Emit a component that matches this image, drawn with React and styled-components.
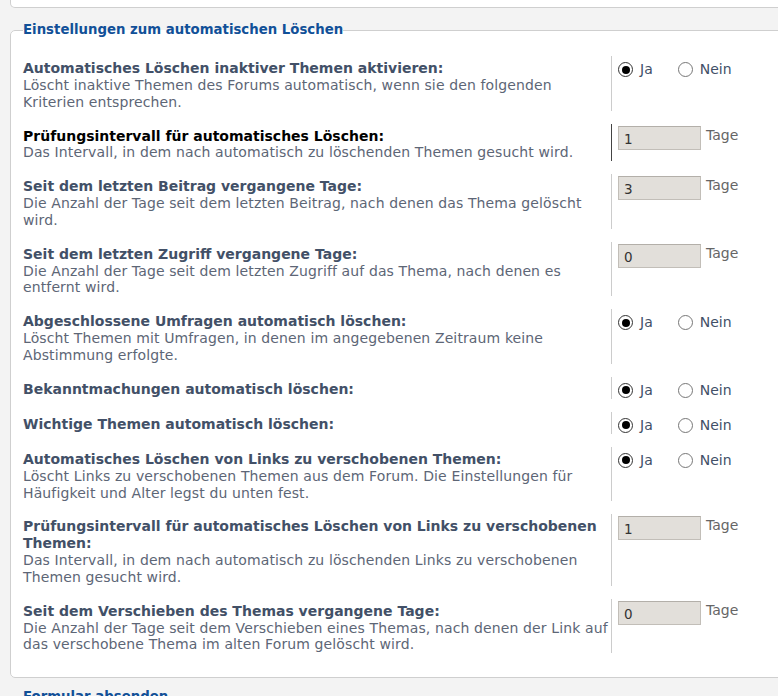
import React from 'react';
import styled, { createGlobalStyle } from 'styled-components';

const GlobalStyle = createGlobalStyle`
  html, body {
    margin: 0;
    padding: 0;
    overflow: hidden;
    background: #f3f3f3;
  }
  body {
    font-family: "DejaVu Sans", Verdana, sans-serif;
  }
`;

const Page = styled.div`
  padding-left: 10px;
  width: 1100px;
`;

const TopBox = styled.div`
  height: 7px;
  background: #fff;
  border: 1px solid #cfcfcf;
  border-top: none;
  border-radius: 0 0 0 5px;
`;

const Fieldset = styled.fieldset`
  margin: ${({ first }) => (first ? '13px' : '10px')} 0 0;
  padding: 0 12px 24px 12px;
  background: #fff;
  border: 1px solid #cfcfcf;
  border-radius: 5px;
`;

const Legend = styled.legend`
  padding: 0;
  margin-left: 0;
  font-family: "DejaVu Sans", Verdana, sans-serif;
  font-size: 13.3px;
  font-weight: bold;
  color: #115098;
  line-height: 18px;
`;

const List = styled.div`
  display: flex;
  flex-direction: column;
  gap: 13px;
  padding-top: 17px;
  width: 740px;
`;

const Row = styled.dl`
  display: grid;
  grid-template-columns: 588px 1fr;
  margin: 0;
`;

const Term = styled.dt`
  padding-top: 4px;
  font-size: 14px;
  line-height: 16.85px;
`;

const Title = styled.div`
  font-weight: bold;
  color: ${({ active }) => (active ? '#000' : '#425067')};
`;

const Explain = styled.div`
  color: #5d6676;
  letter-spacing: 0.12px;
`;

const Value = styled.dd`
  margin: 0;
  border-left: 1px solid ${({ active }) => (active ? '#444' : '#cccccc')};
  padding: ${({ kind }) => (kind === 'radio' ? '5px' : '2px')} 0 0 6px;
  display: flex;
  align-items: flex-start;
  font-size: 14px;
  line-height: 17px;
`;

const RadioLabel = styled.label`
  display: flex;
  align-items: center;
  gap: 7px;
  color: #425067;
  margin-right: ${({ last }) => (last ? '0' : '25px')};
`;

const Radio = styled.span`
  box-sizing: border-box;
  width: 15px;
  height: 15px;
  border-radius: 50%;
  border: 1px solid ${({ checked }) => (checked ? '#333' : '#777')};
  background: #fff;
  display: flex;
  align-items: center;
  justify-content: center;
  &::after {
    content: '';
    display: ${({ checked }) => (checked ? 'block' : 'none')};
    width: 8px;
    height: 8px;
    border-radius: 50%;
    background: #000;
  }
`;

const NumberBox = styled.input`
  box-sizing: border-box;
  width: 83px;
  height: 24px;
  margin: 0;
  padding: 2px 5px 0;
  border: 1px solid #c2beb8;
  border-top-color: #b3afa9;
  background: #e2dfda;
  font-family: "DejaVu Sans", Verdana, sans-serif;
  font-size: 13.5px;
  color: #333;
  outline: none;
`;

const Unit = styled.span`
  margin-left: 5px;
  color: #666;
  line-height: 17px;
  padding-top: 1px;
`;

const rows = [
  {
    title: 'Automatisches Löschen inaktiver Themen aktivieren:',
    explain: 'Löscht inaktive Themen des Forums automatisch, wenn sie den folgenden Kriterien entsprechen.',
    kind: 'radio',
  },
  {
    title: 'Prüfungsintervall für automatisches Löschen:',
    explain: 'Das Intervall, in dem nach automatisch zu löschenden Themen gesucht wird.',
    kind: 'number',
    value: '1',
    active: true,
  },
  {
    title: 'Seit dem letzten Beitrag vergangene Tage:',
    explain: 'Die Anzahl der Tage seit dem letzten Beitrag, nach denen das Thema gelöscht wird.',
    kind: 'number',
    value: '3',
  },
  {
    title: 'Seit dem letzten Zugriff vergangene Tage:',
    explain: 'Die Anzahl der Tage seit dem letzten Zugriff auf das Thema, nach denen es entfernt wird.',
    kind: 'number',
    value: '0',
  },
  {
    title: 'Abgeschlossene Umfragen automatisch löschen:',
    explain: 'Löscht Themen mit Umfragen, in denen im angegebenen Zeitraum keine Abstimmung erfolgte.',
    kind: 'radio',
  },
  { title: 'Bekanntmachungen automatisch löschen:', kind: 'radio' },
  { title: 'Wichtige Themen automatisch löschen:', kind: 'radio' },
  {
    title: 'Automatisches Löschen von Links zu verschobenen Themen:',
    explain: 'Löscht Links zu verschobenen Themen aus dem Forum. Die Einstellungen für Häufigkeit und Alter legst du unten fest.',
    kind: 'radio',
  },
  {
    title: 'Prüfungsintervall für automatisches Löschen von Links zu verschobenen Themen:',
    explain: 'Das Intervall, in dem nach automatisch zu löschenden Links zu verschobenen Themen gesucht wird.',
    kind: 'number',
    value: '1',
  },
  {
    title: 'Seit dem Verschieben des Themas vergangene Tage:',
    explain: 'Die Anzahl der Tage seit dem Verschieben eines Themas, nach denen der Link auf das verschobene Thema im alten Forum gelöscht wird.',
    kind: 'number',
    value: '0',
  },
];

const SettingRow = ({ row }) => (
  <Row>
    <Term>
      <Title active={row.active}>{row.title}</Title>
      {row.explain && <Explain>{row.explain}</Explain>}
    </Term>
    <Value kind={row.kind} active={row.active}>
      {row.kind === 'radio' ? (
        <>
          <RadioLabel>
            <Radio checked />
            Ja
          </RadioLabel>
          <RadioLabel last>
            <Radio />
            Nein
          </RadioLabel>
        </>
      ) : (
        <>
          <NumberBox type="text" defaultValue={row.value} />
          <Unit>Tage</Unit>
        </>
      )}
    </Value>
  </Row>
);

export default function App() {
  return (
    <>
      <GlobalStyle />
      <Page>
        <TopBox />
        <Fieldset first>
          <Legend>Einstellungen zum automatischen Löschen</Legend>
          <List>
            {rows.map((row, i) => (
              <SettingRow key={i} row={row} />
            ))}
          </List>
        </Fieldset>
        <Fieldset>
          <Legend>Formular absenden</Legend>
          <List />
        </Fieldset>
      </Page>
    </>
  );
}
